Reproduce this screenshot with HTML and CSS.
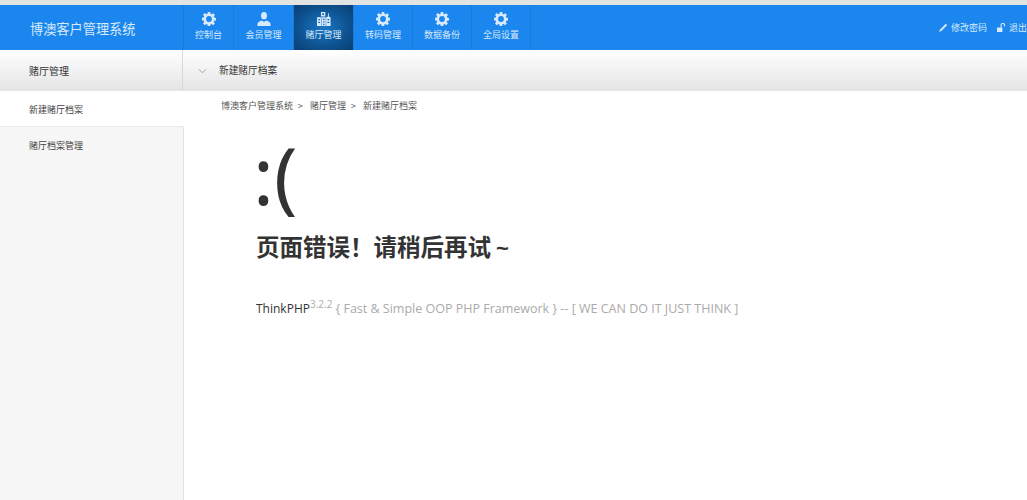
FILE: index.html
```html
<!DOCTYPE html>
<html lang="en">
<head>
    <meta charset="UTF-8">
    <title>博澳客户管理系统</title>
    <link rel="stylesheet" href="styles.css">
</head>
<body>

<svg class="svg-defs" width="0" height="0">
    <symbol id="icon-gear" viewBox="0 0 16 16">
        <path fill-rule="evenodd" d="M6.600 0h2.800l.4 2.200 1.200.5L12.800 1.400l2 2-1.300 1.800.5 1.200 2 .4v2.800l-2.100.4-.5 1.200 1.300 1.800-2 2-1.800-1.300-1.200.5-.4 2.100H6.600l-.4-2.100-1.200-.5-1.800 1.300-2-2 1.300-1.800-.5-1.200L0 9.400V6.600l2-.4.5-1.200-1.300-1.800 2-2L5 2.700l1.200-.5zM8 4.700a3.300 3.300 0 1 0 0 6.600 3.300 3.300 0 0 0 0-6.600z"/>
    </symbol>
</svg>

<div class="top-strip"></div>

<div class="header">
    <div class="logo">博澳客户管理系统</div>
    <ul class="nav">
        <li class="nav-item nav-sm"><svg class="nav-icon"><use href="#icon-gear"/></svg><span>控制台</span></li>
        <li class="nav-item nav-lg">
            <svg class="nav-icon" viewBox="0 0 16 16"><ellipse cx="8" cy="4.200" rx="3.400" ry="4.200"/><path d="M.5 16v-2.600c0-2 3-3.200 5.300-3.800L8 11.500l2.200-1.900c2.300.6 5.300 1.800 5.300 3.800V16z"/></svg>
            <span>会员管理</span>
        </li>
        <li class="nav-item nav-lg active">
            <svg class="nav-icon" viewBox="0 0 16 16"><path fill-rule="evenodd" d="M4.500 0h5v5h-5zM6 1.500v2h2v-2zM0 6h5v10H0zM1.500 8v1.500h2V8zM1.500 11v1.500h2V11zM5.500 6h4.500v10H5.500zM7 7.500V9h1.500V7.500zM7 10.500V12h1.500v-1.500zM7 13.500V15h1.500v-1.500zM10.500 6l2-1V1.500h1V5l2 1v10h-5zM12 8v1.500h2V8zM12 11v1.500h2V11z"/></svg>
            <span>赌厅管理</span>
        </li>
        <li class="nav-item"><svg class="nav-icon"><use href="#icon-gear"/></svg><span>转码管理</span></li>
        <li class="nav-item"><svg class="nav-icon"><use href="#icon-gear"/></svg><span>数据备份</span></li>
        <li class="nav-item nav-lg"><svg class="nav-icon"><use href="#icon-gear"/></svg><span>全局设置</span></li>
    </ul>
    <div class="user-links">
        <span class="user-link">
            <svg class="user-icon" viewBox="0 0 10 10"><path d="M0 10l1-2.600L7.500.9l1.600 1.600-6.500 6.500z"/></svg>修改密码
        </span>
        <span class="user-link">
            <svg class="user-icon" viewBox="0 0 10 10"><path d="M0 5h6v5H0z"/><path d="M4.500 5V2.500a2 2 0 0 1 4 0V4" fill="none" stroke="#d7e9fb" stroke-width="1.200"/></svg>退出
        </span>
    </div>
</div>

<div class="subbar">
    <div class="subbar-title">赌厅管理</div>
    <div class="subbar-current">
        <svg class="chevron" viewBox="0 0 10 6"><path d="M1 1l4 4 4-4" fill="none" stroke="#999" stroke-width="1"/></svg>
        <span>新建赌厅档案</span>
    </div>
</div>

<div class="main">
    <div class="sidebar">
        <div class="side-item current">新建赌厅档案</div>
        <div class="side-item">赌厅档案管理</div>
    </div>
    <div class="content">
        <div class="breadcrumb">
            <span>博澳客户管理系统</span><i>&gt;</i><span>赌厅管理</span><i>&gt;</i><span>新建赌厅档案</span>
        </div>
        <div class="error">
            <div class="face">:(</div>
            <h1>页面错误！请稍后再试<span class="tilde">~</span></h1>
            <div class="copyright">
                <p>ThinkPHP<sup>3.2.2</sup> <span>{ Fast &amp; Simple OOP PHP Framework } -- [ WE CAN DO IT JUST THINK ]</span></p>
            </div>
        </div>
    </div>
</div>

</body>
</html>
```

FILE: styles.css
```css
body {
    margin: 0;
    padding: 0;
    height: 500px;
    overflow: hidden;
    background-color: #fff;
    color: #333;
    font-family: "Noto Sans CJK SC", "Liberation Sans", sans-serif;
    font-size: 10px;
}
.svg-defs {
    display: block;
    height: 0;
}
.top-strip {
    height: 5px;
    background-color: #e2e4e4;
}
.header {
    display: flex;
    height: 45px;
    background-color: #1b86ee;
    color: #d7e9fb;
}
.logo {
    width: 183px;
    box-sizing: border-box;
    padding-left: 30px;
    line-height: 47px;
    font-size: 13.200px;
}
.nav {
    display: flex;
    flex: 1;
    margin: 0;
    padding: 0;
    list-style: none;
}
.nav-item {
    display: flex;
    flex-direction: column;
    align-items: center;
    width: 59px;
    box-sizing: border-box;
    padding-top: 7px;
    border-left: 1px solid #1a7cdc;
}
.nav-item:last-child {
    border-right: 1px solid #1a7cdc;
}
.nav-sm {
    width: 50px;
}
.nav-lg {
    width: 60px;
}
.nav-item span {
    margin-top: 2px;
    line-height: 14px;
    font-size: 9px;
}
.nav-item.active {
    background: radial-gradient(ellipse at center, #1a77c7 0%, #0d5290 60%, #093f72 100%);
}
.nav-icon {
    width: 14px;
    height: 14px;
    fill: #d7e9fb;
}
.user-links {
    display: flex;
    gap: 10px;
    width: 88px;
    padding-top: 16px;
    white-space: nowrap;
    font-size: 9px;
    line-height: 13px;
    overflow: hidden;
}
.user-link {
    display: flex;
    align-items: center;
    height: 13px;
}
.user-icon {
    width: 9px;
    height: 9px;
    margin-right: 3px;
    fill: #d7e9fb;
    flex: none;
}
.subbar {
    display: flex;
    height: 41px;
    background: linear-gradient(#ffffff, #e4e4e4);
    line-height: 41px;
    color: #333;
}
.subbar-title {
    width: 183px;
    box-sizing: border-box;
    padding-left: 29px;
    border-right: 1px solid #d8d8d8;
    font-size: 10px;
}
.subbar-current {
    display: flex;
    align-items: center;
    padding-left: 15px;
    font-size: 9.700px;
}
.chevron {
    width: 9px;
    height: 6px;
    margin-right: 12px;
}
.main {
    display: flex;
    height: 409px;
}
.sidebar {
    width: 183px;
    border-right: 1px solid #e3e3e3;
    background-color: #f6f6f6;
}
.side-item {
    height: 35px;
    padding: 1px 0 0 29px;
    line-height: 35px;
    font-size: 9px;
    color: #444;
}
.side-item.current {
    margin-right: -1px;
    background-color: #fff;
    border-bottom: 1px solid #eaeaea;
    height: 34px;
}
.content {
    flex: 1;
    min-width: 0;
}
.breadcrumb {
    padding: 8px 0 0 37px;
    line-height: 14px;
    font-size: 9px;
    color: #555;
}
.breadcrumb i {
    margin: 0 7px 0 5px;
    font-style: normal;
}
.error {
    padding: 14px 0 0 69px;
}
.face {
    height: 96px;
    line-height: 96px;
    font-family: "Noto Sans", sans-serif;
    font-size: 78px;
    color: #333;
}
h1 {
    margin: 5px 0 0 3px;
    line-height: 36px;
    font-size: 23.500px;
    font-weight: 700;
    color: #333;
}
.tilde {
    margin-left: 5px;
    font-family: "Liberation Sans", sans-serif;
    font-size: 22px;
    font-weight: 700;
}
.copyright {
    margin: 27px 0 0 3px;
    font-family: "Open Sans", sans-serif;
    font-size: 12px;
    color: #333;
}
.copyright p {
    margin: 0;
    line-height: 20px;
}
.copyright sup {
    font-size: 10px;
    color: #aaa;
}
.copyright span {
    font-size: 12.500px;
    color: #aaa;
}
```
